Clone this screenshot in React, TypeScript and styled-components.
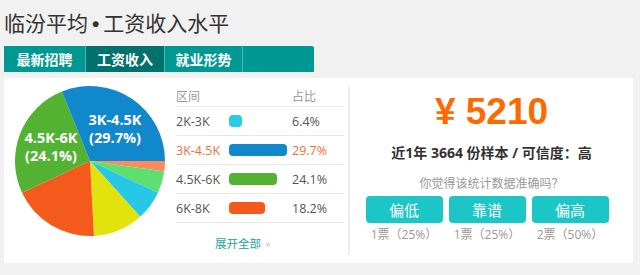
import React from 'react';
import styled, { createGlobalStyle } from 'styled-components';

const GlobalStyle = createGlobalStyle`
  html, body {
    margin: 0;
    padding: 0;
    background: #f1f1f1;
  }
  body {
    font-family: "Noto Sans", "Noto Sans CJK SC", sans-serif;
  }
`;

const Page = styled.div`
  width: 640px;
  height: 275px;
  padding: 0 4px;
  box-sizing: border-box;
  overflow: hidden;
`;

const Title = styled.h1`
  margin: 0;
  height: 46px;
  line-height: 44px;
  font-family: "Noto Sans CJK SC", sans-serif;
  font-size: 21px;
  font-weight: 400;
  color: #333;
`;

const Dot = styled.span`
  font-family: "Liberation Sans", Arial, sans-serif;
  font-weight: 700;
  margin: 0 4px;
`;

const TabBar = styled.div`
  display: flex;
  width: 310px;
  height: 26px;
  background: #009892;
  border-radius: 0 2px 0 0;
`;

const Tab = styled.div<{ $active?: boolean; $w: number }>`
  width: ${(p) => p.$w}px;
  display: flex;
  align-items: center;
  justify-content: center;
  font-family: "Noto Sans CJK SC", sans-serif;
  font-size: 14px;
  font-weight: 700;
  color: #fff;
  background: ${(p) => (p.$active ? '#00716c' : 'transparent')};
  border-right: 1px solid #45b6b1;
`;

const Panel = styled.div`
  margin-top: 6px;
  width: 629px;
  height: 185px;
  background: #fff;
  display: flex;
`;

const PieCol = styled.div`
  width: 172px;
  padding: 8px 0 0 11px;
  box-sizing: border-box;
`;

const TableCol = styled.div`
  width: 168px;
  padding-top: 8px;
  display: flex;
  flex-direction: column;
`;

const Row = styled.div<{ $head?: boolean; $hot?: boolean }>`
  display: grid;
  grid-template-columns: 53px 63px 1fr;
  align-items: center;
  height: ${(p) => (p.$head ? 20 : 28)}px;
  border-bottom: 1px solid #e8e8e8;
  font-family: "Open Sans", "Noto Sans CJK SC", sans-serif;
  font-size: ${(p) => (p.$head ? 12 : 12.5)}px;
  color: ${(p) => (p.$head ? '#999' : p.$hot ? '#f0703c' : '#555')};
`;

const Bar = styled.div<{ $color: string }>`
  height: 12px;
  border-radius: 4px;
  background: ${(p) => p.$color};
`;

const More = styled.div`
  margin-top: 12px;
  padding-left: 39px;
  font-family: "Noto Sans CJK SC", sans-serif;
  font-size: 11.5px;
  color: #25a19c;
  span {
    color: #bbb;
    margin-left: 4px;
  }
`;

const Divider = styled.div`
  width: 2px;
  margin: 8px 0 8px 4px;
  background: #ececec;
`;

const Summary = styled.div`
  flex: 1;
  display: flex;
  flex-direction: column;
  align-items: center;
  padding-top: 13px;
`;

const Price = styled.div`
  font-family: "Liberation Sans", Arial, sans-serif;
  font-size: 37px;
  font-weight: 700;
  line-height: 42px;
  color: #ff6a00;
`;

const Stats = styled.div`
  margin-top: 9px;
  font-family: "Open Sans", "Noto Sans CJK SC", sans-serif;
  font-size: 14px;
  font-weight: 700;
  color: #333;
`;

const Question = styled.div`
  margin-top: 12px;
  font-family: "Noto Sans CJK SC", sans-serif;
  font-size: 12px;
  color: #999;
`;

const Votes = styled.div`
  display: flex;
  gap: 6px;
  margin-top: 5px;
  margin-left: -9px;
`;

const Vote = styled.div`
  display: flex;
  flex-direction: column;
  align-items: center;
`;

const VoteButton = styled.div`
  width: 77px;
  height: 27px;
  border-radius: 4px;
  background: #1cc6c6;
  color: #fff;
  font-family: "Noto Sans CJK SC", sans-serif;
  font-size: 15px;
  display: flex;
  align-items: center;
  justify-content: center;
`;

const VoteCount = styled.div`
  margin-top: 2px;
  font-family: "Open Sans", "Noto Sans CJK SC", sans-serif;
  font-size: 12px;
  color: #999;
`;

const slices = [
  { color: '#ff8a5c', deg: 8 },
  { color: '#5ee071', deg: 17 },
  { color: '#27c8e6', deg: 23 },
  { color: '#e2e20c', deg: 39 },
  { color: '#f45a1c', deg: 68 },
  { color: '#53b232', deg: 93 },
  { color: '#1187cc', deg: 112 },
];

const rows = [
  { range: '2K-3K', pct: '6.4%', color: '#2bcbe6', w: 13 },
  { range: '3K-4.5K', pct: '29.7%', color: '#1187cc', w: 58, hot: true },
  { range: '4.5K-6K', pct: '24.1%', color: '#53b232', w: 48 },
  { range: '6K-8K', pct: '18.2%', color: '#f45a1c', w: 36 },
];

const Pie: React.FC = () => {
  const cx = 75;
  const cy = 75;
  const r = 75;
  let start = 0;
  const pt = (a: number) => {
    const rad = (a * Math.PI) / 180;
    return `${cx + r * Math.cos(rad)} ${cy + r * Math.sin(rad)}`;
  };
  return (
    <svg width="150" height="150" viewBox="0 0 150 150">
      {slices.map((s, i) => {
        const end = start + s.deg;
        const d = `M${cx} ${cy} L${pt(start)} A${r} ${r} 0 ${s.deg > 180 ? 1 : 0} 1 ${pt(end)} Z`;
        start = end;
        return <path key={i} d={d} fill={s.color} />;
      })}
      <g fill="#fff" fontFamily="'Open Sans', sans-serif" fontWeight="700" fontSize="14.5" textAnchor="middle">
        <text x="100" y="39">3K-4.5K</text>
        <text x="100" y="57">(29.7%)</text>
        <text x="36" y="57">4.5K-6K</text>
        <text x="36" y="75">(24.1%)</text>
      </g>
    </svg>
  );
};

const App: React.FC = () => {
  return (
    <Page>
      <GlobalStyle />
      <Title>
        临汾平均<Dot>•</Dot>工资收入水平
      </Title>
      <TabBar>
        <Tab $w={81}>最新招聘</Tab>
        <Tab $w={78} $active>工资收入</Tab>
        <Tab $w={77}>就业形势</Tab>
      </TabBar>
      <Panel>
        <PieCol>
          <Pie />
        </PieCol>
        <TableCol>
          <Row $head>
            <span>区间</span>
            <span />
            <span>占比</span>
          </Row>
          {rows.map((r) => (
            <Row key={r.range} $hot={r.hot}>
              <span>{r.range}</span>
              <div>
                <Bar $color={r.color} style={{ width: r.w }} />
              </div>
              <span>{r.pct}</span>
            </Row>
          ))}
          <More>
            展开全部<span>»</span>
          </More>
        </TableCol>
        <Divider />
        <Summary>
          <Price>¥ 5210</Price>
          <Stats>近1年 3664 份样本 / 可信度：高</Stats>
          <Question>你觉得该统计数据准确吗？</Question>
          <Votes>
            <Vote>
              <VoteButton>偏低</VoteButton>
              <VoteCount>1票（25%）</VoteCount>
            </Vote>
            <Vote>
              <VoteButton>靠谱</VoteButton>
              <VoteCount>1票（25%）</VoteCount>
            </Vote>
            <Vote>
              <VoteButton>偏高</VoteButton>
              <VoteCount>2票（50%）</VoteCount>
            </Vote>
          </Votes>
        </Summary>
      </Panel>
    </Page>
  );
};

export default App;
